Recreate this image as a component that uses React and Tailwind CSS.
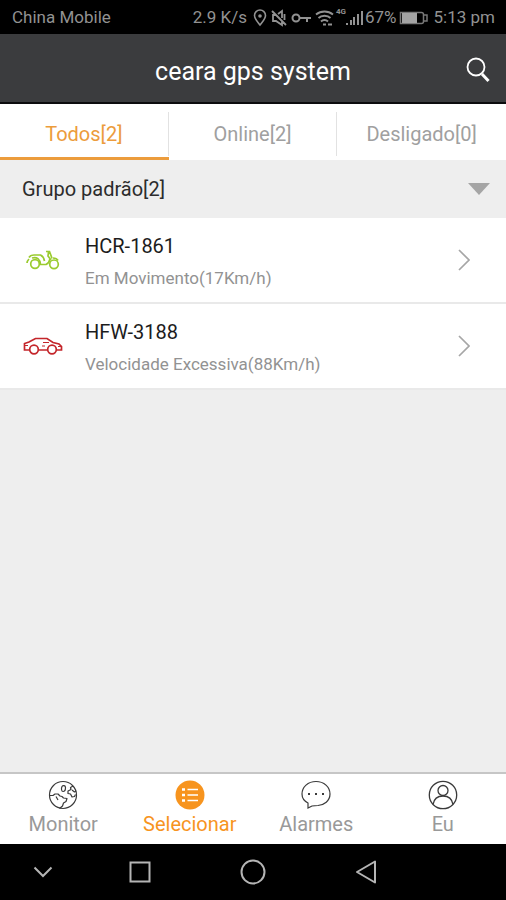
const vehicles = [
  { plate: 'HCR-1861', status: 'Em Movimento(17Km/h)', icon: ScooterIcon },
  { plate: 'HFW-3188', status: 'Velocidade Excessiva(88Km/h)', icon: CarIcon },
];

const tabs = ['Todos[2]', 'Online[2]', 'Desligado[0]'];

const navItems = [
  { label: 'Monitor', icon: GlobeIcon },
  { label: 'Selecionar', icon: ListIcon, active: true },
  { label: 'Alarmes', icon: ChatIcon },
  { label: 'Eu', icon: UserIcon },
];

function ScooterIcon() {
  return (
    <svg width="34" height="20" viewBox="0 0 34 20" fill="none" stroke="#9acb2f" strokeWidth="1.7">
      <circle cx="9" cy="14" r="4.3" />
      <circle cx="28" cy="14.3" r="4.3" />
      <path d="M1 13c0-2 1-3 2-4M3 7.500C4 5.500 6 5 8 5h6.500c2 1 3.500 3 4 6" />
      <path d="M6 8c5-1.500 8 1 8.500 6.500H20c2-1 3.500-3 4-5.500" />
      <path d="M20 1.500h3.500l1.500 4 1 3M22.500 2L22 6l3 4M27 8c2 0 4 .5 5 2.500" />
    </svg>
  );
}

function CarIcon() {
  return (
    <svg width="40" height="18" viewBox="0 0 40 18" fill="none" stroke="#c4262b" strokeWidth="1.7">
      <circle cx="11" cy="12.500" r="4.300" />
      <circle cx="29" cy="12.500" r="4.300" />
      <path d="M6.500 13H1.500V6.500L6 5l6.500-3.500H24L30 5.500l6 1.500 2.500 2.500V13H33.500M15.500 13h9" />
      <path d="M2 8.500h3M35 9.500h3M20 5.500h6M19 9h3" strokeWidth="1" />
    </svg>
  );
}

function GlobeIcon() {
  return (
    <svg width="30" height="30" viewBox="0 0 30 30" fill="none" stroke="#3a3a3a" strokeWidth="1.2" strokeLinejoin="round">
      <circle cx="15" cy="15" r="13.5" />
      <path d="M2 15.500h3l2-1.500h3l2 2 2 .5 1.500 1.500 3.500.5-1 3-2.500 1.500-1 3-3 2.500M8 16.500l2 3.500" />
      <path d="M14 6.500c1-1.500 3.500-1 3.500 1s-1 4-2.500 4-2-3-1-5z" />
      <path d="M25 6l-2.500 1.500.5 2-3 1.500v2.500l2.500.5 1.500 3 2.500-.5 1-2M24 10l2.500 2 1.500-1" />
    </svg>
  );
}

function ListIcon() {
  return (
    <svg width="30" height="30" viewBox="0 0 30 30" fill="none" stroke="#fff" strokeWidth="1.6">
      <circle cx="15" cy="15" r="14.5" fill="#f7941e" stroke="none" />
      <path d="M12.500 9.500H23M12.500 15H23M12.500 20.500H23" />
      <path d="M7 9.500h3M7 15h3M7 20.500h3" strokeWidth="2.5" />
    </svg>
  );
}

function ChatIcon() {
  return (
    <svg width="30" height="30" viewBox="0 0 30 30" fill="none" stroke="#3a3a3a" strokeWidth="1.2">
      <path d="M7 28v-5C3 21 1 17.500 1 14 1 7 7 1.500 15 1.500S29 7 29 14s-6 11-12 11.500c-3 0-4 0-6 .5z" />
      <path d="M7 14h2M14 14h2M21 14h2" strokeWidth="2" />
    </svg>
  );
}

function UserIcon() {
  return (
    <svg width="30" height="30" viewBox="0 0 30 30" fill="none" stroke="#3a3a3a" strokeWidth="1.3">
      <circle cx="15" cy="15" r="13.7" />
      <circle cx="15" cy="10.5" r="5" />
      <path d="M5 24.500c1-6 5-8.500 10-8.500s9 2.500 10 8.500" />
    </svg>
  );
}

function StatusBar() {
  return (
    <div className="flex h-[34px] items-center bg-black pt-0.5 pr-[11px] pl-3 text-[17px] text-[#929292]">
      <span className="flex-1">China Mobile</span>
      <span className="mr-1.5">2.9 K/s</span>
      <svg className="mr-1" width="14" height="18" viewBox="0 0 14 18" fill="none" stroke="currentColor" strokeWidth="1.6">
        <path d="M7 16C4 12 1.500 10 1.500 6.500a5.500 5.500 0 0111 0C12.500 10 10 12 7 16z" />
        <circle cx="7" cy="7" r="1.8" fill="currentColor" stroke="none" />
      </svg>
      <svg className="mr-1" width="16" height="18" viewBox="0 0 16 18" fill="none" stroke="currentColor" strokeWidth="1.8">
        <path d="M1 2l14 14M5 6H2v6h3l6 4v-4M7 5l4-3v7M13.500 5v6" />
      </svg>
      <svg className="mr-1" width="20" height="18" viewBox="0 0 20 18" fill="none" stroke="currentColor" strokeWidth="2">
        <circle cx="5" cy="9" r="3.5" />
        <path d="M9 9h11M16 9v4" />
      </svg>
      <svg className="mr-0.5" width="19" height="18" viewBox="0 0 19 18" fill="none" stroke="currentColor" strokeWidth="1.9">
        <path d="M1 5.500c5-4 12-4 17 0M3.500 9c3-3 9-3 12 0M6 12.500c2-2 5-2 7 0" />
        <path d="M8 15.500h3M13 15.500h4" />
      </svg>
      <span className="mb-3 text-[8px] leading-none font-bold">4G</span>
      <svg className="mr-0.5" width="17" height="18" viewBox="0 0 17 18" fill="currentColor">
        <path d="M0 14h2v2H0zM4 11h2v5H4zM7 8h2v8H7zM11 5h2v11h-2zM15 2h2v14h-2z" />
      </svg>
      <span className="mr-0.5">67%</span>
      <svg className="mr-1.5" width="29" height="16" viewBox="0 0 29 16">
        <path d="M1.500 2.500h21q2 0 2 2v7q0 2-2 2h-21zM25 5h3v6h-3" fill="none" stroke="#777" strokeWidth="1.5" />
        <path d="M3 3h15v10H3z" fill="#a3a3a3" />
      </svg>
      <span>5:13 pm</span>
    </div>
  );
}

function VehicleRow({ vehicle }) {
  const Icon = vehicle.icon;
  return (
    <li className="border-b-2 border-[#e9e9e9]">
      <button type="button" className="flex h-[84px] w-full items-center text-left">
        <span className="flex w-[85px] justify-center">
          <Icon />
        </span>
        <span className="flex flex-1 flex-col gap-2 pt-1">
          <span className="text-[20px] leading-6 text-[#1c1c1c]">{vehicle.plate}</span>
          <span className="text-[17px] leading-6 text-[#929292]">{vehicle.status}</span>
        </span>
        <svg className="mr-9" width="12" height="22" viewBox="0 0 12 22" fill="none" stroke="#a6a6a6" strokeWidth="1.7">
          <path d="M1 1l10 10L1 21" />
        </svg>
      </button>
    </li>
  );
}

export default function App() {
  return (
    <div className="flex min-h-screen flex-col bg-[#eeeeee] font-[Roboto,sans-serif]">
      <StatusBar />

      <header className="grid h-[70px] grid-cols-[48px_1fr_48px] items-center border-b-2 border-[#0c0c0e] bg-[#3b3c3e] pt-1">
        <h1 className="col-start-2 pt-1 text-center text-[25px] leading-8 text-white">ceara gps system</h1>
        <button type="button" aria-label="Buscar" className="pl-2">
          <svg width="24" height="26" viewBox="0 0 24 26" fill="none" stroke="#fff">
            <circle cx="10" cy="10" r="8.5" strokeWidth="1.8" />
            <path d="M16 17l6.500 7" strokeWidth="3" />
          </svg>
        </button>
      </header>

      <div role="tablist" className="grid h-14 grid-cols-3 bg-white text-[20px]">
        {tabs.map((tab, i) => (
          <button
            key={tab}
            type="button"
            role="tab"
            aria-selected={i === 0}
            className={
              i === 0
                ? 'flex border-b-3 border-[#ec9c3c] pt-2 text-[#ec9c3c]'
                : 'flex border-b-3 border-white pt-2 text-[#a0a0a0]'
            }
          >
            <span
              className={
                i < 2
                  ? 'flex h-11 flex-1 items-center justify-center border-r border-[#e2e2e2]'
                  : 'flex h-11 flex-1 items-center justify-center'
              }
            >
              {tab}
            </span>
          </button>
        ))}
      </div>

      <main className="flex-1">
        <button type="button" className="flex h-[58px] w-full items-center justify-between pr-4 pl-[22px] text-[20px] text-[#2c2c2c]">
          Grupo padrão[2]
          <svg width="22" height="12" viewBox="0 0 22 12" fill="#a5a5a5">
            <path d="M0 0h22L11 12z" />
          </svg>
        </button>
        <ul className="bg-white">
          {vehicles.map((v) => (
            <VehicleRow key={v.plate} vehicle={v} />
          ))}
        </ul>
      </main>

      <nav className="grid h-[72px] grid-cols-4 border-t-2 border-[#c6c6c6] bg-white">
        {navItems.map(({ label, icon: Icon, active }) => (
          <button
            key={label}
            type="button"
            className={
              active
                ? 'flex flex-col items-center pt-1.5 text-[20px] leading-7 text-[#f7941e]'
                : 'flex flex-col items-center pt-1.5 text-[20px] leading-7 text-[#999999]'
            }
          >
            <Icon />
            {label}
          </button>
        ))}
      </nav>

      <div className="flex h-14 items-center bg-black">
        <div className="grid flex-1 grid-cols-[17fr_22fr_23fr_22fr_17fr] items-center justify-items-center">
          <button type="button" aria-label="Ocultar">
            <svg width="20" height="12" viewBox="0 0 20 12" fill="none" stroke="#b5b5b5" strokeWidth="2">
              <path d="M1.500 1.500L10 10l8.500-8.500" />
            </svg>
          </button>
          <button type="button" aria-label="Recentes">
            <svg width="22" height="22" viewBox="0 0 22 22" fill="none" stroke="#b5b5b5" strokeWidth="2">
              <path d="M1.500 1.500h19v19h-19z" />
            </svg>
          </button>
          <button type="button" aria-label="Início">
            <svg width="26" height="26" viewBox="0 0 26 26" fill="none" stroke="#b5b5b5" strokeWidth="2">
              <circle cx="13" cy="13" r="11.5" />
            </svg>
          </button>
          <button type="button" aria-label="Voltar">
            <svg width="22" height="24" viewBox="0 0 22 24" fill="none" stroke="#b5b5b5" strokeWidth="2" strokeLinejoin="round">
              <path d="M20 1.500v21L2 12z" />
            </svg>
          </button>
        </div>
      </div>
    </div>
  );
}
